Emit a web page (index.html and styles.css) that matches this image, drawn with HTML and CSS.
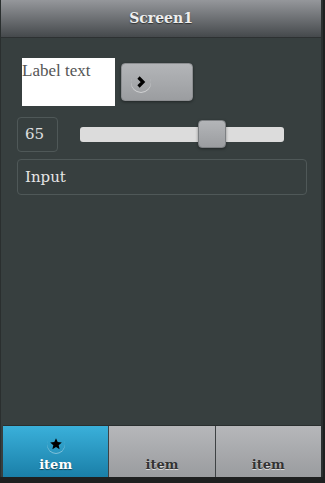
FILE: index.html
```html
<!DOCTYPE html>
<html lang="en">
<head>
    <meta charset="UTF-8">
    <meta name="viewport" content="width=device-width, initial-scale=1.0">
    <title>Screen1</title>
    <link rel="stylesheet" href="styles.css">
</head>
<body>
    <div class="page">
        <div class="header">Screen1</div>

        <div class="content">
            <div class="row">
                <div class="label">Label text</div>
                <button class="btn">
                    <span class="btn-icon">
                        <svg width="16" height="16" viewBox="0 0 16 16"><path d="M5.5 3.5 L10 8 L5.5 12.5" fill="none" stroke="#000" stroke-width="3.2"/></svg>
                    </span>
                </button>
            </div>

            <div class="row slider-row">
                <div class="num">65</div>
                <div class="track">
                    <div class="thumb" style="left: 58%;"></div>
                </div>
            </div>

            <div class="input">Input</div>
        </div>

        <div class="navbar">
            <div class="tab active">
                <span class="tab-icon">
                    <svg width="14" height="14" viewBox="0 0 24 24"><path d="M12 2 L14.9 8.6 L22 9.3 L16.6 14 L18.2 21 L12 17.3 L5.8 21 L7.4 14 L2 9.3 L9.1 8.6 Z" fill="#000"/></svg>
                </span>
                <span class="tab-text">item</span>
            </div>
            <div class="tab">
                <span class="tab-text">item</span>
            </div>
            <div class="tab">
                <span class="tab-text">item</span>
            </div>
        </div>
    </div>
</body>
</html>
```

FILE: styles.css
```css
html, body {
    margin: 0;
    padding: 0;
    height: 100%;
}
body {
    background: #1e2020;
    font-family: "DejaVu Serif", Georgia, serif;
}
.page {
    height: 477px;
    width: 320px;
    margin-right: 3px;
    background: #373f3f;
    border-left: 1px solid #2a2f2f;
    border-right: 2px solid #2a2f2f;
    display: flex;
    flex-direction: column;
}
.header {
    height: 37px;
    line-height: 36px;
    text-align: center;
    font-size: 14px;
    font-weight: bold;
    color: #eee;
    text-shadow: 0 1px 1px #333;
    background: linear-gradient(#95979b, #45494c);
    border-bottom: 1px solid #2d3132;
}
.content {
    flex: 1;
    padding: 20px 16px 0 16px;
}
.row {
    display: flex;
    align-items: center;
}
.label {
    width: 93px;
    height: 48px;
    margin-left: 5px;
    background: #fff;
    color: #555;
    font-family: "Liberation Serif", serif;
    font-size: 17px;
    line-height: 26px;
    align-self: flex-start;
}
.btn {
    width: 72px;
    height: 38px;
    margin-left: 6px;
    padding: 0 0 0 9px;
    border: 1px solid #8c8e91;
    border-radius: 4px;
    background: linear-gradient(#b3b5b8, #9b9da0);
    box-shadow: 0 1px 3px rgba(0,0,0,0.4);
    display: flex;
    align-items: center;
}
.btn-icon {
    width: 20px;
    height: 20px;
    border-radius: 50%;
    box-shadow: 0 1px 0 rgba(255,255,255,0.5);
    display: flex;
    align-items: center;
    justify-content: center;
}
.slider-row {
    margin-top: 11px;
}
.num {
    width: 41px;
    height: 35px;
    box-sizing: border-box;
    border: 1px solid #4f5858;
    border-radius: 4px;
    color: #e0e0e0;
    font-size: 15px;
    line-height: 33px;
    padding-left: 7px;
}
.track {
    position: relative;
    width: 204px;
    height: 15px;
    margin-left: 22px;
    background: #dcdcdc;
    border-radius: 3px;
}
.thumb {
    position: absolute;
    top: -7px;
    width: 28px;
    height: 28px;
    box-sizing: border-box;
    border: 1px solid #7d8083;
    border-radius: 4px;
    background: linear-gradient(#b3b5b8, #9b9da0);
    box-shadow: 0 1px 3px rgba(0,0,0,0.4);
}
.input {
    margin-top: 7px;
    height: 36px;
    box-sizing: border-box;
    width: 290px;
    border: 1px solid #4f5858;
    border-radius: 4px;
    color: #e6e6e6;
    font-size: 15px;
    line-height: 34px;
    padding-left: 7px;
}
.navbar {
    display: flex;
    height: 51px;
    margin: 0 0 0 2px;
    border-top: 1px solid #2a2f2f;
}
.tab {
    flex: 1;
    display: flex;
    flex-direction: column;
    align-items: center;
    justify-content: flex-end;
    padding-bottom: 5px;
    background: linear-gradient(#b6b7ba, #9a9c9f);
    border-left: 1px solid #3e4244;
    color: #333;
    text-shadow: 0 1px 0 #ddd;
    font-weight: bold;
    font-size: 13px;
}
.tab:first-child {
    border-left: none;
}
.tab.active {
    background: linear-gradient(#3ab0da, #1a7fa8);
    color: #fff;
    text-shadow: 0 1px 1px #145;
}
.tab-icon {
    width: 18px;
    height: 18px;
    border-radius: 50%;
    box-shadow: 0 1px 0 rgba(255,255,255,0.4);
    display: flex;
    align-items: center;
    justify-content: center;
    margin-bottom: 4px;
}
```
